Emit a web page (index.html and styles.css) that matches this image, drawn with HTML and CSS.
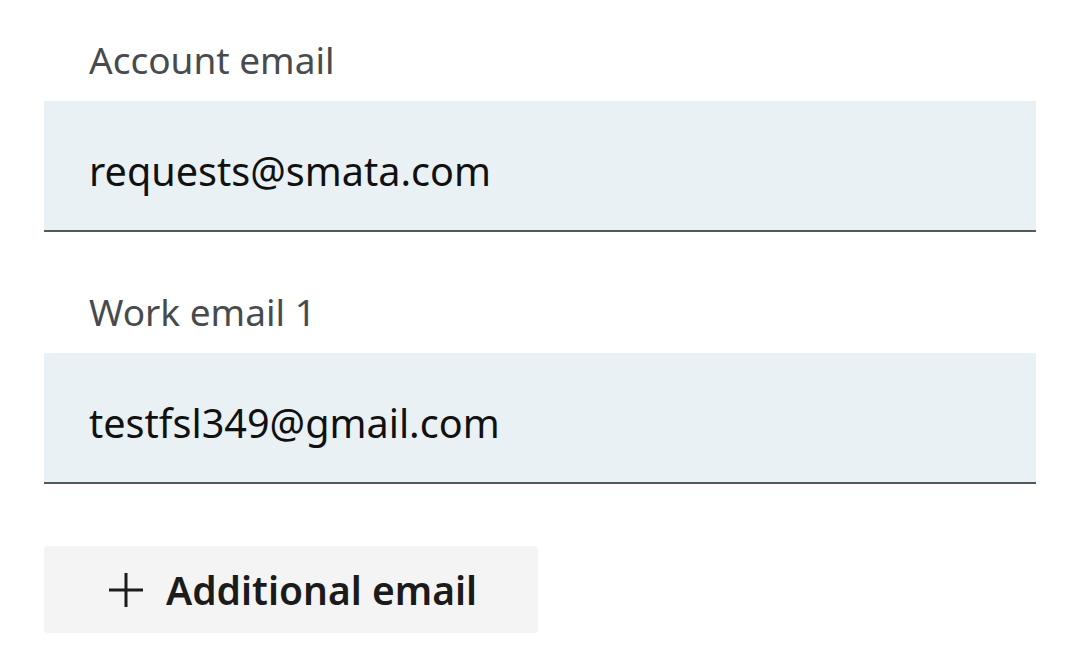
FILE: index.html
```html
<!DOCTYPE html>
<html lang="en">
<head>
<meta charset="utf-8">
<title>Emails</title>
<link rel="stylesheet" href="styles.css">
</head>
<body>
<main class="form">
  <div class="field">
    <label class="field-label" for="acc">Account email</label>
    <div class="field-input" id="acc">requests@smata.com</div>
  </div>
  <div class="field">
    <label class="field-label" for="work1">Work email 1</label>
    <div class="field-input" id="work1">testfsl349@gmail.com</div>
  </div>
  <button class="add-btn" type="button">
    <svg class="plus" viewBox="0 0 34 34" width="34" height="34" aria-hidden="true">
      <path d="M17 0V34M0 17H34" stroke="#1b1b1b" stroke-width="3" fill="none"/>
    </svg>
    <span>Additional email</span>
  </button>
</main>
</body>
</html>
```

FILE: styles.css
```css
html, body {
  margin: 0;
  padding: 0;
  background: #ffffff;
}

body {
  font-family: "Noto Sans", "Open Sans", sans-serif;
}

.form {
  padding: 36px 0 0 44px;
  width: 992px;
  display: flex;
  flex-direction: column;
  align-items: flex-start;
}

.field {
  width: 992px;
  display: flex;
  flex-direction: column;
  margin-bottom: 56px;
}

.field + .field {
  margin-bottom: 62px;
}

.field-label {
  font-size: 37px;
  line-height: 48px;
  color: #484b4e;
  padding-left: 45px;
  margin-bottom: 17px;
}

.field-input {
  background: #eaf1f4;
  border-bottom: 2px solid #53595d;
  height: 119px;
  box-sizing: content-box;
  padding: 10px 0 0 45px;
  display: flex;
  align-items: center;
  font-size: 39.6px;
  line-height: 54px;
  color: #111111;
}

.add-btn {
  display: flex;
  align-items: center;
  gap: 23px;
  height: 87px;
  width: 494px;
  padding: 0 0 0 65px;
  border: none;
  border-radius: 4px;
  background: #f4f4f4;
  font-family: "Noto Sans", "Open Sans", sans-serif;
  font-size: 39px;
  font-weight: 600;
  color: #1b1b1b;
  cursor: pointer;
}

.plus {
  flex: none;
}
```
